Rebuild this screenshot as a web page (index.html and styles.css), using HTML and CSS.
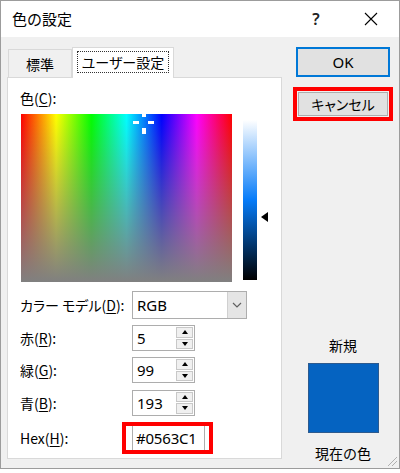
FILE: index.html
```html
<!DOCTYPE html>
<html lang="ja">
<head>
<meta charset="utf-8">
<title>色の設定</title>
<link rel="stylesheet" href="styles.css">
</head>
<body>
<div class="window">
  <div class="titlebar">
    <span class="title">色の設定</span>
    <span class="help">?</span>
    <span class="close">
      <svg width="14" height="14" viewBox="0 0 14 14"><path d="M1 1 L13 13 M13 1 L1 13" stroke="#000" stroke-width="1.1" fill="none"/></svg>
    </span>
  </div>
  <div class="content">
    <div class="left">
      <div class="tabs">
        <div class="tab">標準</div>
        <div class="tab active"><span class="focus">ユーザー設定</span></div>
      </div>
      <div class="panel">
        <div class="color-label">色(<u>C</u>):</div>
        <div class="picker">
          <div class="spectrum">
            <span class="ch ch-t"></span>
            <span class="ch ch-l"></span>
            <span class="ch ch-r"></span>
            <span class="ch ch-b"></span>
          </div>
          <div class="lum-wrap">
            <div class="lum"></div>
            <span class="lum-arrow"></span>
          </div>
        </div>
        <div class="form">
          <div class="lbl">カラー モデル(<u>D</u>):</div>
          <div class="select">
            <span class="sel-val">RGB</span>
            <span class="drop"><svg width="10" height="6" viewBox="0 0 10 6"><path d="M1 1 L5 5 L9 1" stroke="#606060" stroke-width="1.2" fill="none"/></svg></span>
          </div>
          <div class="lbl">赤(<u>R</u>):</div>
          <div class="spin"><span class="val">5</span><span class="spin-btns"><span class="sb"><span class="tri-up"></span></span><span class="sb"><span class="tri-down"></span></span></span></div>
          <div class="lbl">緑(<u>G</u>):</div>
          <div class="spin"><span class="val">99</span><span class="spin-btns"><span class="sb"><span class="tri-up"></span></span><span class="sb"><span class="tri-down"></span></span></span></div>
          <div class="lbl">青(<u>B</u>):</div>
          <div class="spin"><span class="val">193</span><span class="spin-btns"><span class="sb"><span class="tri-up"></span></span><span class="sb"><span class="tri-down"></span></span></span></div>
          <div class="lbl">Hex(<u>H</u>):</div>
          <div class="hex-mark"><div class="hex">#0563C1</div></div>
        </div>
      </div>
    </div>
    <div class="right">
      <div class="btn ok">OK</div>
      <div class="cancel-mark"><div class="btn">キャンセル</div></div>
      <div class="new-label">新規</div>
      <div class="swatch"></div>
      <div class="cur-label">現在の色</div>
    </div>
  </div>
  <svg class="grip" width="12" height="12" viewBox="0 0 12 12">
    <g fill="#b0b0b0">
      <rect x="10" y="2" width="1" height="1"/><rect x="9" y="3" width="1" height="1"/><rect x="8" y="4" width="1" height="1"/><rect x="7" y="5" width="1" height="1"/><rect x="6" y="6" width="1" height="1"/><rect x="5" y="7" width="1" height="1"/><rect x="4" y="8" width="1" height="1"/><rect x="3" y="9" width="1" height="1"/><rect x="2" y="10" width="1" height="1"/>
      <rect x="10" y="6" width="1" height="1"/><rect x="9" y="7" width="1" height="1"/><rect x="8" y="8" width="1" height="1"/><rect x="7" y="9" width="1" height="1"/><rect x="6" y="10" width="1" height="1"/>
    </g>
  </svg>
</div>
</body>
</html>
```

FILE: styles.css
```css
* { box-sizing: border-box; }
html, body { margin: 0; padding: 0; background: #fff; }
body {
  font-family: "Noto Sans CJK JP", "Noto Sans", sans-serif;
  font-size: 14px;
  color: #000;
  width: 400px;
  height: 473px;
  overflow: hidden;
}
u { text-decoration: underline; text-underline-offset: 2px; }

.window {
  position: relative;
  width: 400px;
  height: 469px;
  border: 1px solid #9c9c9c;
  background: #f0f0f0;
  display: flex;
  flex-direction: column;
}

.titlebar {
  height: 36px;
  background: #fff;
  display: flex;
  align-items: center;
  padding-left: 11px;
  padding-right: 6px;
  flex-shrink: 0;
}
.title { font-size: 15px; line-height: 18px; }
.help {
  margin-left: auto;
  width: 22px;
  text-align: center;
  font-family: "Noto Sans", sans-serif;
  font-size: 16px;
  font-weight: 600;
  color: #222;
}
.close {
  margin-left: 22px;
  width: 44px;
  height: 36px;
  display: flex;
  align-items: center;
  justify-content: center;
}

.content {
  flex: 1;
  display: flex;
  padding: 10px 0 6px 6px;
}

.left {
  width: 275px;
  display: flex;
  flex-direction: column;
}
.tabs {
  display: flex;
  align-items: flex-start;
  height: 31px;
  margin-bottom: -1px;
  padding-left: 1px;
  position: relative;
  z-index: 1;
  font-feature-settings: "palt";
}
.tab {
  height: 28px;
  margin-top: 2px;
  width: 64px;
  border: 1px solid #d9d9d9;
  border-bottom: none;
  display: flex;
  align-items: center;
  justify-content: center;
  background: #f0f0f0;
}
.tab.active {
  height: 31px;
  margin-top: 0;
  width: 102px;
  background: #fff;
  padding-bottom: 2px;
}
.focus {
  border: 1px dotted #333;
  padding: 1px 4px;
  line-height: 18px;
}

.panel {
  height: 382px;
  border: 1px solid #d9d9d9;
  background: #fff;
  padding: 11px 0 0 12px;
}
.color-label { line-height: 18px; }

.picker {
  display: flex;
  margin-top: 7px;
}
.spectrum {
  position: relative;
  margin-left: 1px;
  width: 211px;
  height: 168px;
  background:
    linear-gradient(to bottom, rgba(128,128,128,0), #808080),
    linear-gradient(to right, #f00, #ff0, #0f0, #0ff, #00f, #f0f, #f00);
  overflow: hidden;
}
.ch { position: absolute; background: #fff; }
.ch-t { left: 121px; top: -1px; width: 4px; height: 4px; }
.ch-l { left: 112px; top: 7px; width: 6px; height: 3px; }
.ch-r { left: 127px; top: 7px; width: 6px; height: 3px; }
.ch-b { left: 121px; top: 14px; width: 4px; height: 6px; }

.lum-wrap {
  position: relative;
  margin-left: 11px;
  margin-top: 6px;
  width: 26px;
}
.lum {
  width: 14px;
  height: 160px;
  background: linear-gradient(to bottom, #fff, hsl(211, 95%, 50%), #000);
}
.lum-arrow {
  position: absolute;
  left: 18px;
  top: 92px;
  width: 0;
  height: 0;
  border-right: 7px solid #000;
  border-top: 5px solid transparent;
  border-bottom: 5px solid transparent;
}

.form {
  margin-top: 9px;
  display: grid;
  grid-template-columns: 112px auto;
  grid-template-rows: 28px 26px 26px 27px 32px;
  row-gap: 6px;
  align-items: center;
  justify-items: start;
}
.lbl { line-height: 18px; font-feature-settings: "palt"; }

.select {
  width: 115px;
  height: 28px;
  border: 1px solid #adadad;
  display: flex;
  align-items: stretch;
  background: #fff;
}
.sel-val {
  flex: 1;
  padding-left: 4px;
  display: flex;
  align-items: center;
  font-family: "Noto Sans", sans-serif;
  font-size: 15px;
}
.drop {
  width: 19px;
  background: #e5e5e5;
  border-left: 1px solid #d0d0d0;
  display: flex;
  align-items: center;
  justify-content: center;
}

.spin {
  width: 63px;
  height: 26px;
  border: 1px solid #adadad;
  display: flex;
  background: #fff;
}
.val {
  flex: 1;
  padding-left: 4px;
  display: flex;
  align-items: center;
  font-family: "Noto Sans", sans-serif;
  font-size: 15px;
}
.spin-btns {
  width: 17px;
  display: flex;
  flex-direction: column;
  margin: 1px 1px 1px 0;
  gap: 1px;
}
.sb {
  flex: 1;
  background: #f0f0f0;
  border: 1px solid #c8c8c8;
  display: flex;
  align-items: center;
  justify-content: center;
}
.tri-up, .tri-down {
  width: 0; height: 0;
  border-left: 3px solid transparent;
  border-right: 3px solid transparent;
}
.tri-up { border-bottom: 4px solid #000; }
.tri-down { border-top: 4px solid #000; }

.hex-mark {
  margin-left: -10px;
  width: 91px;
  height: 32px;
  border: 4px solid #f00;
  padding-left: 6px;
  background: #fff;
}
.hex {
  width: 73px;
  height: 24px;
  border-left: 1px solid #adadad;
  border-right: 1px solid #adadad;
  padding-left: 3px;
  display: flex;
  align-items: center;
  font-family: "Noto Sans", sans-serif;
  font-size: 15px;
  letter-spacing: -0.2px;
}

.right {
  margin-left: 11px;
  width: 100px;
  display: flex;
  flex-direction: column;
  align-items: center;
}
.btn {
  background: #e1e1e1;
  border: 1px solid #adadad;
  display: flex;
  align-items: center;
  justify-content: center;
  font-feature-settings: "palt";
}
.btn.ok {
  width: 94px;
  height: 30px;
  border: 2px solid #0078d7;
  font-family: "Noto Sans", sans-serif;
  font-size: 15px;
}
.cancel-mark {
  margin-top: 10px;
  width: 100px;
  height: 34px;
  border: 4px solid #f00;
  padding: 1px;
  background: #f0f0f0;
  display: flex;
}
.cancel-mark .btn { flex: 1; }

.new-label { margin-top: auto; line-height: 18px; }
.swatch {
  margin-top: 9px;
  width: 71px;
  height: 70px;
  background: #0563c1;
  border: 1px solid #2d5a8e;
}
.cur-label { margin-top: 11px; line-height: 18px; }

.grip { position: absolute; right: 1px; bottom: 1px; }
```
